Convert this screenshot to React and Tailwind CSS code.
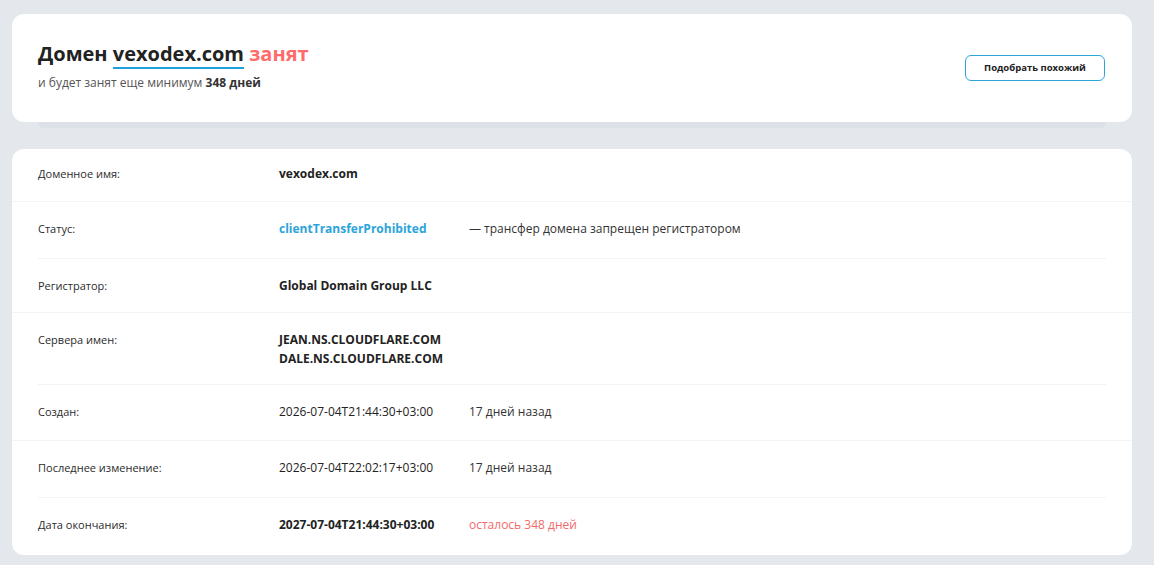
import React from "react";

const font = { fontFamily: '"Open Sans", "Noto Sans", sans-serif' };

function Row({ label, children, extra, extraClass = "", divider, pb = "pb-[20px]" }) {
  return (
    <div>
      <div className={"flex px-[26px] pt-[17px] " + pb}>
        <div className="w-[241px] shrink-0 text-[11px] leading-[19px] text-[#2b2b2b]">{label}</div>
        <div className="w-[190px] shrink-0 text-[12px] leading-[19px] text-[#222]">{children}</div>
        {extra && <div className={"text-[12px] leading-[19px] " + extraClass}>{extra}</div>}
      </div>
      {divider === "full" && <div className="h-px bg-[#f1f3f5]" />}
      {divider === "inset" && <div className="mx-[26px] h-px bg-[#f1f3f5]" />}
    </div>
  );
}

export default function App() {
  return (
    <div className="min-h-[565px] w-[1154px] bg-[#e4e8ed] pl-[12px] pr-[22px] pt-[14px] pb-[11px]" style={font}>
      <div className="relative">
        <div className="relative z-10 flex items-start justify-between rounded-[12px] bg-white pl-[26px] pr-[27px] pt-[27px] h-[108px]">
          <div>
            <h1 className="text-[20px] font-bold leading-[26px] text-[#222]">
              Домен{" "}
              <span className="border-b-2 border-[#1ea1dd]">vexodex.com</span>{" "}
              <span className="text-[#ff6a6a]">занят</span>
            </h1>
            <p className="mt-[8px] text-[12px] leading-[16px] text-[#555]">
              и будет занят еще минимум <b className="font-bold text-[#333]">348 дней</b>
            </p>
          </div>
          <button className="mt-[14px] h-[26px] w-[140px] rounded-[6px] border border-[#2aa6dc] text-[9.5px] font-bold text-[#222]">
            Подобрать похожий
          </button>
        </div>
        <div className="mx-[26px] h-[6px] rounded-b-[6px] bg-[#dce1e7]" />
      </div>

      <div className="mt-[21px] rounded-[12px] bg-white">
        <div className="flex px-[26px] pt-[15px] pb-[18px]">
          <div className="w-[241px] shrink-0 text-[11px] leading-[19px] text-[#2b2b2b]">Доменное имя:</div>
          <div className="text-[12px] font-bold leading-[19px] text-[#222]">vexodex.com</div>
        </div>
        <div className="h-px bg-[#f1f3f5]" />
        <Row label="Статус:" extra="— трансфер домена запрещен регистратором" extraClass="text-[#333]" divider="inset">
          <span className="font-bold text-[#2ba4da]">clientTransferProhibited</span>
        </Row>
        <Row label="Регистратор:" divider="full" pb="pb-[17px]">
          <span className="font-bold">Global Domain Group LLC</span>
        </Row>
        <Row label="Сервера имен:" divider="inset" pb="pb-[16px]">
          <span className="block font-bold">JEAN.NS.CLOUDFLARE.COM</span>
          <span className="block font-bold">DALE.NS.CLOUDFLARE.COM</span>
        </Row>
        <Row label="Создан:" extra="17 дней назад" extraClass="text-[#333]" divider="full" pb="pb-[19px]">
          2026-07-04T21:44:30+03:00
        </Row>
        <Row label="Последнее изменение:" extra="17 дней назад" extraClass="text-[#333]" divider="inset">
          2026-07-04T22:02:17+03:00
        </Row>
        <Row label="Дата окончания:" extra="осталось 348 дней" extraClass="text-[#f26b6b]" pb="pb-[21px]">
          <span className="font-bold">2027-07-04T21:44:30+03:00</span>
        </Row>
      </div>
    </div>
  );
}
